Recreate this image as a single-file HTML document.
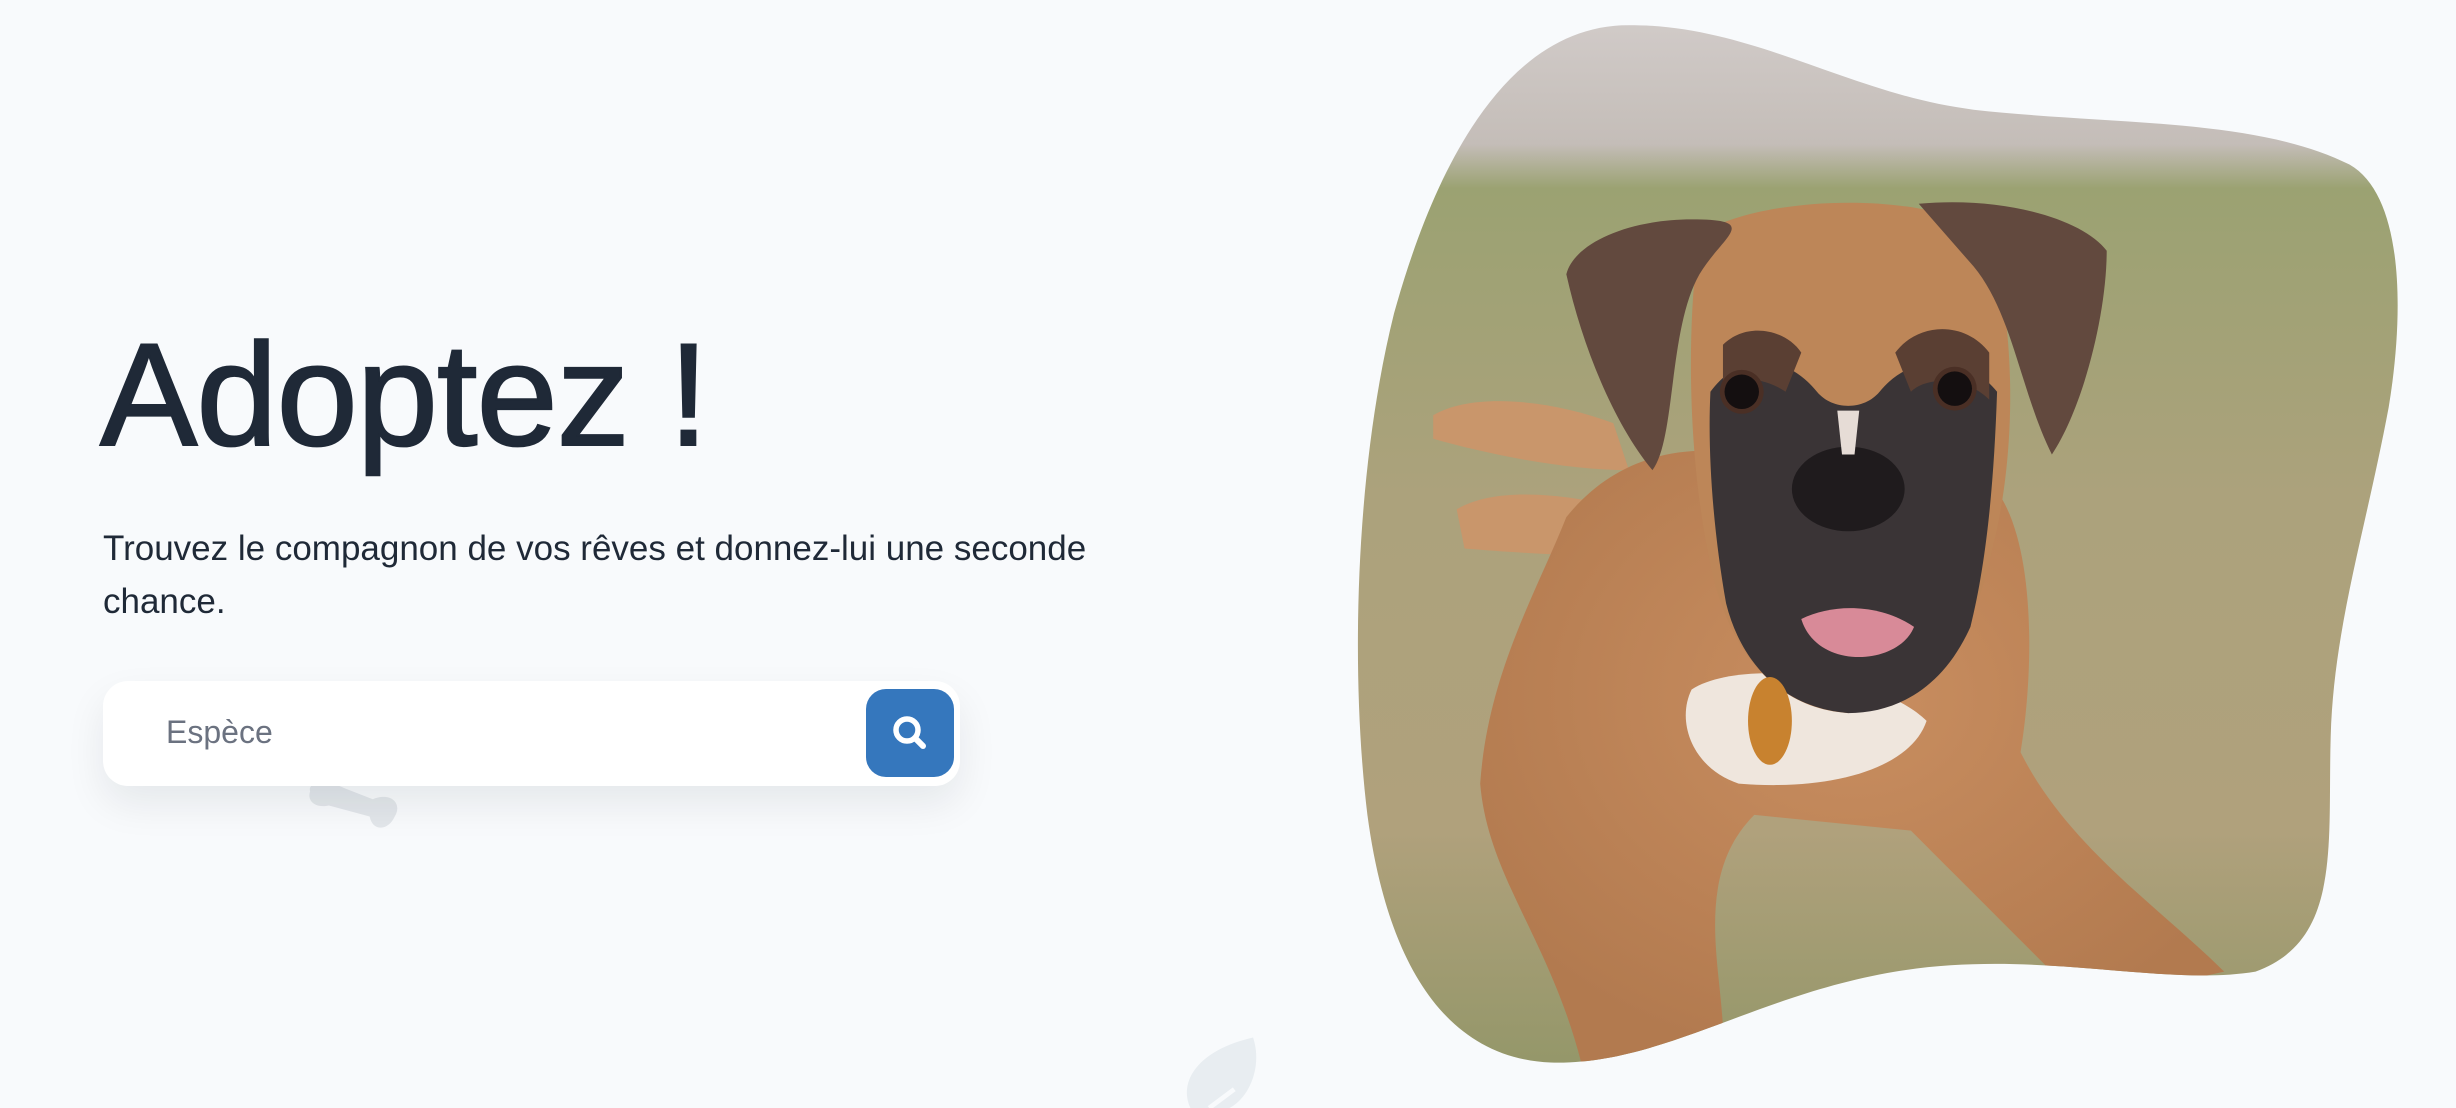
<!DOCTYPE html>
<html><head><meta charset="utf-8"><style>
html,body{margin:0;padding:0;}
body{width:2456px;height:1108px;background:#f8fafc;position:relative;overflow:hidden;font-family:"Liberation Sans",sans-serif;}
h1{position:absolute;left:100px;top:322px;margin:0;font-size:146px;font-weight:400;color:#1f2937;letter-spacing:-1px;line-height:1;-webkit-text-stroke:2px #1f2937;}
p{position:absolute;left:103px;top:522px;margin:0;width:1050px;font-size:35px;line-height:53px;color:#1f2937;}
.box{position:absolute;left:103px;top:681px;width:857px;height:105px;background:#fff;border-radius:25px;box-shadow:0 18px 40px rgba(15,23,42,0.08);}
.ph{position:absolute;left:63px;top:33px;font-size:32px;color:#6b7280;}
.btn{position:absolute;left:763px;top:8px;width:88px;height:88px;background:#3577bd;border-radius:20px;}
</style></head><body>
<svg width="2456" height="1108" viewBox="0 0 1568 707" preserveAspectRatio="none" style="position:absolute;left:0;top:0">
<defs>
<clipPath id="b"><path d="M1040 16 C1120 16 1180 60 1260 70 C1350 80 1440 75 1500 105 C1535 125 1535 200 1525 260 C1510 340 1490 400 1488 470 C1486 540 1495 600 1440 620 C1380 630 1300 605 1210 620 C1120 635 1060 680 990 678 C920 675 885 610 873 520 C862 430 865 300 890 200 C915 110 960 16 1040 16 Z"/></clipPath>
<linearGradient id="g" x1="0" y1="0" x2="0" y2="1"><stop offset="0" stop-color="#d3cdcb"/><stop offset="0.13" stop-color="#c4bdb8"/><stop offset="0.17" stop-color="#9ba272"/><stop offset="0.45" stop-color="#aca27c"/><stop offset="0.75" stop-color="#b0a17c"/><stop offset="1" stop-color="#8f9566"/></linearGradient>
<radialGradient id="fur" cx="0.5" cy="0.4" r="0.6"><stop offset="0" stop-color="#c98e60"/><stop offset="1" stop-color="#b27a4f"/></radialGradient>
</defs>
<path d="M198 505 C196 498 210 498 220 503 L238 510 C250 505 257 513 252 521 C248 530 238 531 236 521 L210 514 C200 516 196 510 198 505 Z" fill="#e2e6ea"/>
<path d="M760 707 C752 690 765 670 800 662 C806 680 798 700 785 707 Z" fill="#e8edf1"/>
<path d="M788 695 L772 707" stroke="#f8fafc" stroke-width="3"/>
<g clip-path="url(#b)">
<rect x="860" y="0" width="700" height="707" fill="url(#g)"/>
<!-- back legs -->
<path d="M915 265 C940 250 990 255 1030 270 L1040 300 C1000 300 950 290 915 280 Z" fill="#c9966b"/>
<path d="M930 325 C955 310 1000 315 1040 325 L1040 355 C1000 355 960 352 935 350 Z" fill="#c9966b"/>
<!-- body -->
<path d="M1000 330 C1040 280 1100 280 1150 300 L1260 300 C1300 320 1300 420 1290 480 C1320 540 1380 580 1420 620 L1330 640 C1290 600 1250 560 1220 530 L1120 520 C1080 560 1100 620 1100 660 L1010 680 C990 600 950 560 945 500 C950 430 980 380 1000 330 Z" fill="url(#fur)"/>
<path d="M1080 440 C1110 420 1200 430 1230 460 C1220 490 1170 505 1110 500 C1080 490 1070 460 1080 440 Z" fill="#efe6dd"/>
<!-- head -->
<path d="M1085 150 C1120 125 1230 120 1270 150 C1290 220 1285 300 1272 350 C1260 410 1230 450 1180 455 C1130 452 1100 410 1090 350 C1080 300 1075 220 1085 150 Z" fill="#bd8658"/>
<path d="M1092 250 C1110 225 1140 225 1160 250 C1170 262 1190 262 1200 250 C1220 225 1255 225 1275 250 C1273 310 1268 360 1258 400 C1240 440 1210 455 1180 455 C1140 452 1112 425 1102 385 C1094 340 1090 290 1092 250 Z" fill="#3a3436"/>
<path d="M1100 220 C1115 205 1140 210 1150 225 L1140 250 C1125 240 1110 240 1100 250 Z M1210 225 C1225 205 1255 205 1270 225 L1270 255 C1255 240 1230 240 1220 250 Z" fill="#5a3f33"/>
<ellipse cx="1180" cy="312" rx="36" ry="27" fill="#1f1b1d"/>
<path d="M1173 262 L1187 262 L1184 290 L1176 290 Z" fill="#e6dcd6"/>
<path d="M1150 395 C1170 385 1200 385 1222 400 C1212 425 1160 428 1150 395 Z" fill="#d88a98"/>
<circle cx="1112" cy="250" r="14" fill="#4a2f25"/><circle cx="1112" cy="250" r="11" fill="#140f10"/>
<circle cx="1248" cy="248" r="14" fill="#4a2f25"/><circle cx="1248" cy="248" r="11" fill="#140f10"/>
<ellipse cx="1130" cy="460" rx="14" ry="28" fill="#c8822f"/>
<!-- ears -->
<path d="M1080 140 C1040 140 1005 155 1000 175 C1010 220 1030 270 1055 300 C1070 280 1065 210 1085 175 C1100 150 1125 140 1080 140 Z" fill="#62493e"/>
<path d="M1225 130 C1280 125 1330 140 1345 160 C1345 200 1330 260 1310 290 C1290 250 1285 200 1260 170 Z" fill="#62493e"/>
</g>
</svg>
<h1>Adoptez !</h1>
<p>Trouvez le compagnon de vos rêves et donnez-lui une seconde chance.</p>
<div class="box"><div class="ph">Espèce</div><div class="btn"><svg width="88" height="88" viewBox="0 0 88 88"><circle cx="41" cy="41" r="11" fill="none" stroke="#fff" stroke-width="5.5"/><path d="M49 49 L57 57" stroke="#fff" stroke-width="6" stroke-linecap="round"/></svg></div></div>
</body></html>
